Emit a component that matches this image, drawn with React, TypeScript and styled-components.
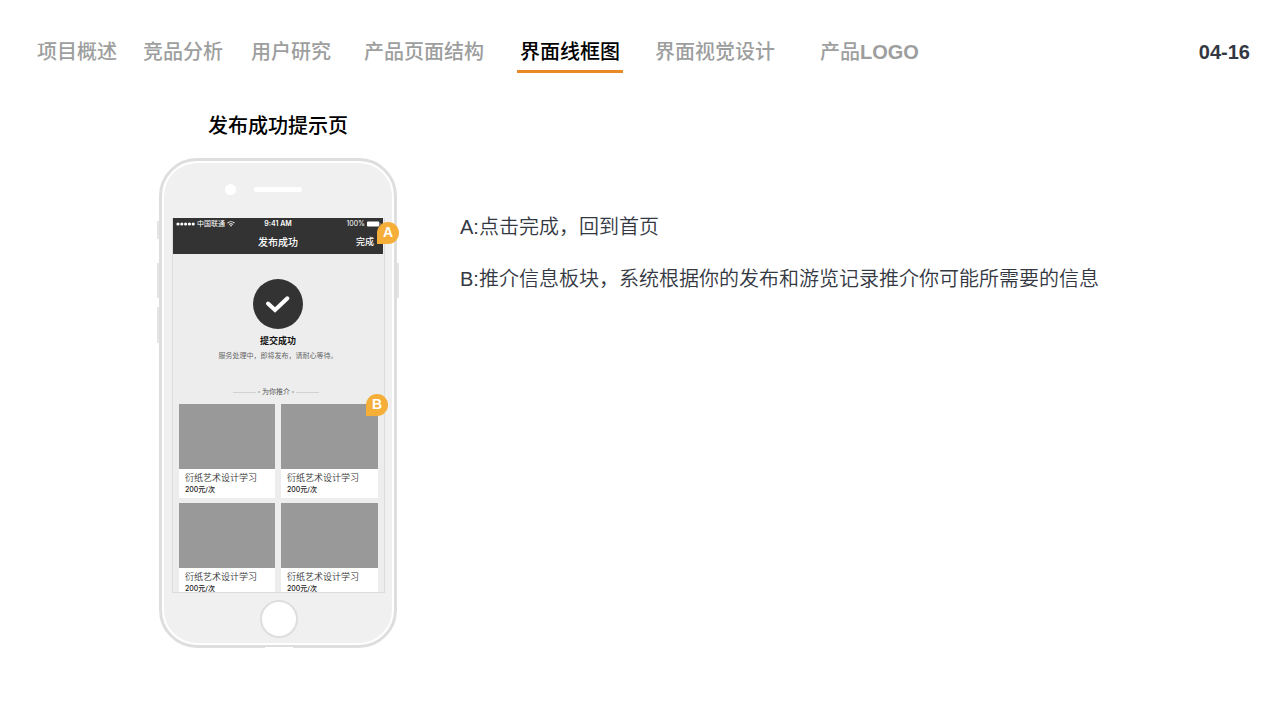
import React from "react";
import styled, { createGlobalStyle } from "styled-components";

const GlobalStyle = createGlobalStyle`
  * { box-sizing: border-box; }
  body {
    margin: 0;
    background: #ffffff;
    font-family: "Liberation Sans", "Noto Sans CJK SC", sans-serif;
    color: #343843;
  }
  h1, h2, p { margin: 0; }
`;

const Page = styled.div`
  min-height: 100vh;
`;

const TopBar = styled.header`
  display: flex;
  justify-content: space-between;
  padding: 34px 30px 0 34px;
  font-size: 20px;
  line-height: 36px;
`;

const Nav = styled.nav`
  display: flex;
`;

const NavLink = styled.a<{ $active?: boolean; $before?: number }>`
  margin-left: ${(p) => p.$before ?? 0}px;
  padding: 0 3px;
  border-bottom: 3px solid ${(p) => (p.$active ? "#e78a25" : "transparent")};
  color: ${(p) => (p.$active ? "#000000" : "#9d9e9e")};
  font-weight: 500;
  text-decoration: none;
  white-space: nowrap;
`;

const Latin = styled.span`
  font-weight: 700;
`;

const PageNumber = styled.span`
  font-weight: 700;
`;

const Main = styled.main`
  display: flex;
  align-items: flex-start;
  gap: 63px;
  padding: 38px 30px 40px 159px;
`;

const Showcase = styled.section`
  flex: none;
  display: flex;
  flex-direction: column;
  align-items: center;
  gap: 17px;
`;

const ShowcaseTitle = styled.h1`
  color: #000000;
  font-size: 20px;
  font-weight: 500;
  line-height: 30px;
`;

const Phone = styled.div`
  position: relative;
  width: 238px;
  padding: 2px;
  border: 3px solid #dedede;
  border-radius: 38px;
  background: #ffffff;
`;

const SideKey = styled.span<{ $side: "left" | "right"; $top: number; $length: number }>`
  position: absolute;
  ${(p) => p.$side}: -5px;
  top: ${(p) => p.$top}px;
  width: 2px;
  height: ${(p) => p.$length}px;
  background: #e4e4e4;
`;

const Port = styled.span`
  position: absolute;
  left: 103px;
  bottom: -3px;
  width: 28px;
  height: 1px;
  background: #ffffff;
`;

const PhoneBody = styled.div`
  border-radius: 33px;
  background: #f0f0f0;
`;

const Earpiece = styled.div`
  display: flex;
  align-items: center;
  gap: 18px;
  height: 55px;
  padding: 0 0 3px 61px;
`;

const Camera = styled.span`
  width: 11px;
  height: 11px;
  border-radius: 50%;
  background: #ffffff;
`;

const Speaker = styled.span`
  width: 48px;
  height: 5px;
  border-radius: 3px;
  background: #ffffff;
`;

const Screen = styled.div`
  height: 375px;
  margin: 0 7px 0 8px;
  padding-right: 1px;
  border: solid #dcdcdc;
  border-width: 0 1px 1px;
  background: #ededed;
  overflow: hidden;
`;

const AppHeader = styled.header`
  height: 36px;
  background: #333333;
  color: #ffffff;
`;

const ThreeColumns = styled.div<{ $height: number }>`
  display: grid;
  grid-template-columns: 1fr auto 1fr;
  align-items: center;
  height: ${(p) => p.$height}px;
`;

const Carrier = styled.div`
  display: flex;
  align-items: center;
  gap: 2px;
  padding-left: 3px;
  font-size: 7px;
  line-height: 12px;
`;

const Clock = styled.span`
  font-family: Inter, sans-serif;
  font-size: 7px;
  font-weight: 600;
  line-height: 12px;
`;

const Power = styled.div`
  display: flex;
  align-items: center;
  justify-content: flex-end;
  gap: 2px;
  padding-right: 2px;
  font-family: Inter, sans-serif;
  font-size: 7px;
  line-height: 12px;
`;

const AppTitle = styled.h2`
  grid-column: 2;
  font: 500 10px/16px "Noto Sans CJK SC", sans-serif;
`;

const DoneButton = styled.button`
  justify-self: end;
  padding: 0 9px 0 0;
  border: 0;
  background: none;
  color: #ffffff;
  font: 500 9px/16px "Noto Sans CJK SC", sans-serif;
`;

const Result = styled.section`
  display: flex;
  flex-direction: column;
  align-items: center;
  padding-top: 25px;
`;

const ResultTitle = styled.h2`
  margin-top: 4px;
  color: #111111;
  font-size: 9px;
  font-weight: 700;
  line-height: 16px;
`;

const ResultText = styled.p`
  color: #666666;
  font-size: 7px;
  line-height: 14px;
  white-space: nowrap;
`;

const Divider = styled.div`
  display: flex;
  align-items: center;
  justify-content: center;
  gap: 2px;
  margin-top: 23px;
  padding-right: 4px;
  color: #555555;
  font-size: 7px;
  line-height: 12px;
`;

const Rule = styled.span`
  width: 23px;
  height: 1px;
  background: #d2d2d2;
`;

const Dot = styled.span`
  width: 2px;
  height: 2px;
  border-radius: 50%;
  background: #b0b0b0;
`;

const CardGrid = styled.div`
  display: grid;
  grid-template-columns: 96fr 97fr;
  gap: 5px 6px;
  padding: 6px 5px 0 6px;
`;

const Card = styled.article`
  height: 94px;
  background: #ffffff;
`;

const Cover = styled.div`
  height: 65px;
  background: #999999;
`;

const CardTitle = styled.p`
  padding: 2px 0 0 6px;
  color: #333333;
  font-size: 9px;
  font-weight: 350;
  line-height: 14px;
  white-space: nowrap;
`;

const Price = styled.p`
  padding-left: 6px;
  color: #222222;
  font-family: Inter, "Noto Sans CJK SC", sans-serif;
  font-size: 7px;
  font-weight: 500;
  line-height: 10px;
`;

const Chin = styled.div`
  display: flex;
  justify-content: center;
  height: 50px;
  padding: 7px 0 0 2px;
`;

const HomeButton = styled.button`
  width: 38px;
  height: 38px;
  padding: 0;
  border: 2px solid #dedede;
  border-radius: 50%;
  background: #ffffff;
`;

const Marker = styled.span<{ $left: number; $top: number }>`
  position: absolute;
  left: ${(p) => p.$left}px;
  top: ${(p) => p.$top}px;
  width: 22px;
  height: 22px;
  border-radius: 11px 11px 11px 0;
  background: #f5ae38;
  color: #ffffff;
  font-size: 14px;
  font-weight: 700;
  line-height: 20px;
  text-align: center;
`;

const Notes = styled.section`
  flex: 1;
  padding-top: 90px;
  font-size: 20px;
  font-weight: 350;
  line-height: 52px;
`;

const navItems = [
  { label: "项目概述" },
  { label: "竞品分析", before: 20 },
  { label: "用户研究", before: 22 },
  { label: "产品页面结构", before: 27 },
  { label: "界面线框图", before: 30, active: true },
  { label: "界面视觉设计", before: 29 },
  { label: "产品", latin: "LOGO", before: 39 },
];

const courses = [1, 2, 3, 4];

const SignalDots = () => (
  <svg width="19" height="4" viewBox="0 0 19 4" fill="#fff" aria-hidden="true">
    {[2, 5.8, 9.6, 13.4, 17.2].map((x) => (
      <circle key={x} cx={x} cy="2" r="1.6" />
    ))}
  </svg>
);

const WifiIcon = () => (
  <svg width="8" height="6" viewBox="0 0 8 6" fill="none" stroke="#fff" aria-hidden="true">
    <path d="M0.5 2.1C2.5 0.2 5.5 0.2 7.5 2.1" strokeWidth="1.1" />
    <path d="M1.9 3.6C3.1 2.5 4.9 2.5 6.1 3.6" strokeWidth="1" />
    <path d="M2.9 4.5L4 5.7L5.1 4.5C4.5 4 3.5 4 2.9 4.5Z" fill="#fff" stroke="none" />
  </svg>
);

const BatteryIcon = () => (
  <svg width="14" height="6" viewBox="0 0 14 6" fill="#fff" aria-hidden="true">
    <rect x="0" y="0.4" width="12.2" height="5.2" rx="0.8" />
    <path d="M12.8 2C13.9 2.3 13.9 3.7 12.8 4Z" />
  </svg>
);

const CheckBadge = () => (
  <svg width="50" height="50" viewBox="0 0 50 50" fill="none" aria-hidden="true">
    <circle cx="25" cy="25" r="25" fill="#333" />
    <path d="M15 24.6L22 31L34.4 19.3" stroke="#fff" strokeWidth="4" strokeLinecap="round" />
  </svg>
);

export default function App() {
  return (
    <Page>
      <GlobalStyle />
      <TopBar>
        <Nav>
          {navItems.map((item) => (
            <NavLink key={item.label} href="#" $active={item.active} $before={item.before}>
              {item.label}
              {item.latin && <Latin>{item.latin}</Latin>}
            </NavLink>
          ))}
        </Nav>
        <PageNumber>04-16</PageNumber>
      </TopBar>
      <Main>
        <Showcase>
          <ShowcaseTitle>发布成功提示页</ShowcaseTitle>
          <Phone>
            <SideKey $side="left" $top={60} $length={18} />
            <SideKey $side="left" $top={102} $length={35} />
            <SideKey $side="left" $top={146} $length={36} />
            <SideKey $side="right" $top={102} $length={35} />
            <PhoneBody>
              <Earpiece>
                <Camera />
                <Speaker />
              </Earpiece>
              <Screen>
                <AppHeader>
                  <ThreeColumns $height={12}>
                    <Carrier>
                      <SignalDots />
                      中国联通
                      <WifiIcon />
                    </Carrier>
                    <Clock>9:41 AM</Clock>
                    <Power>
                      100%
                      <BatteryIcon />
                    </Power>
                  </ThreeColumns>
                  <ThreeColumns $height={24}>
                    <AppTitle>发布成功</AppTitle>
                    <DoneButton type="button">完成</DoneButton>
                  </ThreeColumns>
                </AppHeader>
                <Result>
                  <CheckBadge />
                  <ResultTitle>提交成功</ResultTitle>
                  <ResultText>服务处理中，即将发布，请耐心等待。</ResultText>
                </Result>
                <Divider>
                  <Rule />
                  <Dot />
                  为你推介
                  <Dot />
                  <Rule />
                </Divider>
                <CardGrid>
                  {courses.map((id) => (
                    <Card key={id}>
                      <Cover />
                      <CardTitle>衍纸艺术设计学习</CardTitle>
                      <Price>200元/次</Price>
                    </Card>
                  ))}
                </CardGrid>
              </Screen>
              <Chin>
                <HomeButton type="button" aria-label="Home" />
              </Chin>
            </PhoneBody>
            <Port />
            <Marker $left={215} $top={61}>A</Marker>
            <Marker $left={204} $top={233}>B</Marker>
          </Phone>
        </Showcase>
        <Notes>
          <p>A:点击完成，回到首页</p>
          <p>B:推介信息板块，系统根据你的发布和游览记录推介你可能所需要的信息</p>
        </Notes>
      </Main>
    </Page>
  );
}
